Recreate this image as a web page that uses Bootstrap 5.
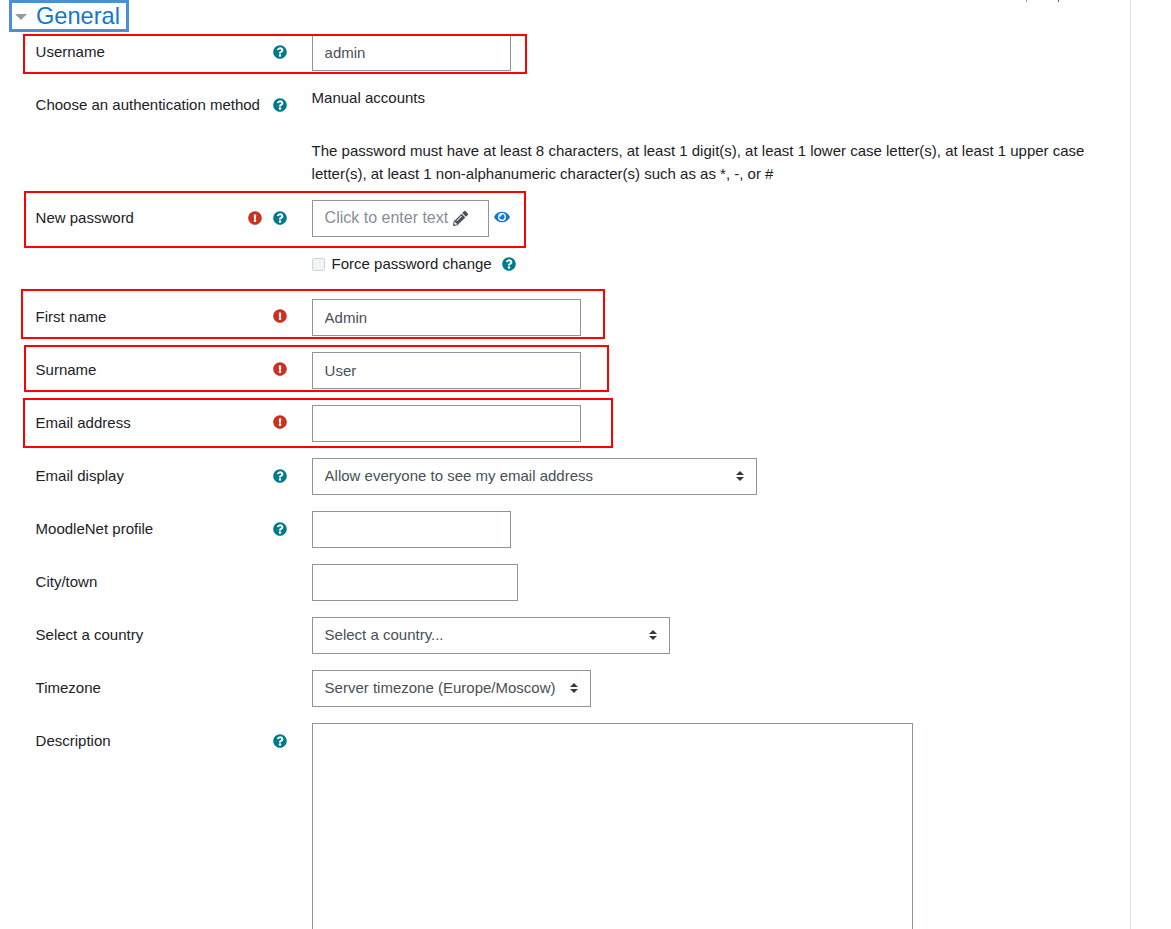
<!DOCTYPE html>
<html lang="en">
<head>
<meta charset="utf-8">
<title>General</title>
<link href="https://cdn.jsdelivr.net/npm/bootstrap@5.3.0/dist/css/bootstrap.min.css" rel="stylesheet">
<style>
html,body{height:929px;overflow:hidden;background:#fff}
body{font-family:"Liberation Sans",Arial,sans-serif;font-size:15px;line-height:22.5px;color:#1d2125}
.sheet{width:1131px;height:929px;border-right:1px solid #dee2e6;overflow:hidden;position:relative}
.speck{position:absolute;top:0;width:1px;height:2px}
.speck-a{left:1026px;background:#9a9a9a}
.speck-b{left:1058px;background:#1177d1}
.sect{display:flex;align-items:center;margin-left:9px;height:32px;width:120px;border:3px solid #4a90d2;font-size:23.6px;color:#1177d1;line-height:26px;padding-left:3px}
.tri{width:0;height:0;border-left:6px solid transparent;border-right:6px solid transparent;border-top:6px solid #999;margin:1px 9px 0 0}
.fitem{display:flex;position:relative;margin-left:35.6px;margin-bottom:16px;min-height:37px}
.lab{width:276px;flex:none;padding-right:25px;display:flex;justify-content:space-between;align-items:flex-start;padding-top:7px;line-height:22.5px}
.addons{display:flex;gap:11px;align-items:center;height:22.5px;padding-top:0}
.only-ex{padding-bottom:2px}
.ico{width:14px;height:14px;display:block}
.q{fill:#007a8c}
.ex{fill:#ca3120}
.fld{height:37px;border:1px solid #8f959e;border-radius:0;padding:6px 12px;font-size:15px;line-height:22.5px;color:#495057;box-shadow:none}
.w199{width:199px}.w206{width:206px}.w269{width:269px}.w177{width:177px}
select.fld{appearance:none;background:#fff url("data:image/svg+xml,%3Csvg xmlns='http://www.w3.org/2000/svg' width='10' height='12'%3E%3Cpath d='M1 5h8L5 1zM1 7h8l-4 4z' fill='%23343a40'/%3E%3C/svg%3E") no-repeat right 11px center;padding-right:28px}
.w445{width:445px}.w358{width:358px}.w279{width:279px}
textarea.fld{width:601px;height:300px;display:block}
.ann{position:absolute;border:2px solid #f00;pointer-events:none}
.ann-user{left:-13px;top:0;width:504.6px;height:40px}
.ann-pass{left:-12px;top:-9px;width:502px;height:57px}
.ann-first{left:-14.6px;top:-10px;width:584px;height:50px}
.ann-sur{left:-11.6px;top:-7px;width:585px;height:47px}
.ann-mail{left:-12.6px;top:-7px;width:590px;height:50px}
.first-row{margin-top:2px}
.auth-row{min-height:38px;margin-bottom:0}
.plain{margin-top:0}
.policy{margin-left:311.6px;width:790px;margin-top:15px;margin-bottom:15px}
.pass-row{margin-bottom:16px}
.editable{display:flex;align-items:center;color:#868e96;background:#fff;font-size:16px}
.pen{width:15px;height:15px;fill:#495057;margin-left:5px}
.eye{width:16px;height:14px;fill:#1177d1;margin:10px 0 0 5px;flex:none}
.force{margin-left:311.6px;margin-bottom:23px;height:22.5px;display:flex;align-items:center}
.box{width:13px;height:13px;border:1px solid #ced4da;background:#f3f3f3;border-radius:2px;margin-right:7px}
.force .ico{margin-left:10px}
</style>
</head>
<body>
<svg width="0" height="0" class="position-absolute">
<defs>
<symbol id="i-q" viewBox="0 0 512 512"><path d="M504 256c0 136.997-111.043 248-248 248S8 392.997 8 256C8 119.083 119.043 8 256 8s248 111.083 248 248zM262.655 90c-54.497 0-89.255 22.957-116.549 63.758-3.536 5.286-2.353 12.415 2.715 16.258l34.699 26.31c5.205 3.947 12.621 3.008 16.665-2.122 17.864-22.658 30.113-35.797 57.303-35.797 20.429 0 45.698 13.148 45.698 32.958 0 14.976-12.363 22.667-32.534 33.976C247.128 238.528 216 254.941 216 296v4c0 6.627 5.373 12 12 12h56c6.627 0 12-5.373 12-12v-1.333c0-28.462 83.186-29.647 83.186-106.667 0-58.002-60.165-106-116.531-106zM256 338c-25.365 0-46 20.635-46 46 0 25.364 20.635 46 46 46s46-20.636 46-46c0-25.365-20.635-46-46-46z"/></symbol>
<symbol id="i-x" viewBox="0 0 512 512"><path d="M504 256c0 136.997-111.043 248-248 248S8 392.997 8 256C8 119.083 119.043 8 256 8s248 111.083 248 248zm-248 50c-25.405 0-46 20.595-46 46s20.595 46 46 46 46-20.595 46-46-20.595-46-46-46zm-43.673-165.346l7.418 136c.347 6.364 5.609 11.346 11.982 11.346h48.546c6.373 0 11.635-4.982 11.982-11.346l7.418-136c.375-6.874-5.098-12.654-11.982-12.654h-63.383c-6.884 0-12.356 5.78-11.981 12.654z"/></symbol>
</defs>
</svg>
<div class="sheet">
<span class="speck speck-a"></span><span class="speck speck-b"></span>
<div class="sect"><span class="tri"></span>General</div>
<div class="fitem first-row">
  <div class="ann ann-user"></div>
  <div class="lab"><span>Username</span><span class="addons"><svg class="ico q"><use href="#i-q"/></svg></span></div>
  <input class="form-control fld w199" value="admin">
</div>
<div class="fitem auth-row">
  <div class="lab"><span>Choose an authentication method</span><span class="addons"><svg class="ico q"><use href="#i-q"/></svg></span></div>
  <div class="plain">Manual accounts</div>
</div>
<div class="policy">The password must have at least 8 characters, at least 1 digit(s), at least 1 lower case letter(s), at least 1 upper case letter(s), at least 1 non-alphanumeric character(s) such as as *, -, or #</div>
<div class="fitem pass-row">
  <div class="ann ann-pass"></div>
  <div class="lab"><span>New password</span><span class="addons"><svg class="ico ex"><use href="#i-x"/></svg><svg class="ico q"><use href="#i-q"/></svg></span></div>
  <div class="fld editable w177">Click to enter text<svg class="pen" viewBox="0 0 512 512"><path d="M497.9 142.1l-46.1 46.1c-4.7 4.7-12.3 4.7-17 0l-111-111c-4.7-4.7-4.7-12.3 0-17l46.1-46.1c18.7-18.7 49.1-18.7 67.9 0l60.1 60.1c18.8 18.7 18.8 49.1 0 67.9zM284.2 99.8L21.6 362.4.4 483.9c-2.9 16.4 11.4 30.6 27.8 27.8l121.5-21.3 262.6-262.6c4.7-4.7 4.7-12.3 0-17l-111-111c-4.8-4.7-12.4-4.7-17.1 0zM124.1 339.9c-5.5-5.5-5.5-14.3 0-19.8l154-154c5.5-5.5 14.3-5.5 19.8 0s5.5 14.3 0 19.8l-154 154c-5.5 5.5-14.3 5.5-19.8 0zM88 424h48v36.3l-64.5 11.3-31.1-31.1L51.7 376H88v48z"/></svg></div>
  <svg class="eye" viewBox="0 0 576 512"><path d="M572.52 241.4C518.29 135.59 410.93 64 288 64S57.68 135.64 3.48 241.41a32.35 32.35 0 0 0 0 29.19C57.71 376.41 165.07 448 288 448s230.32-71.64 284.52-177.41a32.35 32.35 0 0 0 0-29.19zM288 400a144 144 0 1 1 144-144 143.93 143.93 0 0 1-144 144zm0-240a95.31 95.31 0 0 0-25.31 3.79 47.85 47.85 0 0 1-66.9 66.9A95.78 95.78 0 1 0 288 160z"/></svg>
</div>
<div class="force"><span class="box"></span>Force password change<svg class="ico q"><use href="#i-q"/></svg></div>
<div class="fitem">
  <div class="ann ann-first"></div>
  <div class="lab"><span>First name</span><span class="addons only-ex"><svg class="ico ex"><use href="#i-x"/></svg></span></div>
  <input class="form-control fld w269" value="Admin">
</div>
<div class="fitem">
  <div class="ann ann-sur"></div>
  <div class="lab"><span>Surname</span><span class="addons only-ex"><svg class="ico ex"><use href="#i-x"/></svg></span></div>
  <input class="form-control fld w269" value="User">
</div>
<div class="fitem">
  <div class="ann ann-mail"></div>
  <div class="lab"><span>Email address</span><span class="addons only-ex"><svg class="ico ex"><use href="#i-x"/></svg></span></div>
  <input class="form-control fld w269" value="">
</div>
<div class="fitem">
  <div class="lab"><span>Email display</span><span class="addons"><svg class="ico q"><use href="#i-q"/></svg></span></div>
  <select class="form-select fld w445"><option>Allow everyone to see my email address</option></select>
</div>
<div class="fitem">
  <div class="lab"><span>MoodleNet profile</span><span class="addons"><svg class="ico q"><use href="#i-q"/></svg></span></div>
  <input class="form-control fld w199" value="">
</div>
<div class="fitem">
  <div class="lab"><span>City/town</span></div>
  <input class="form-control fld w206" value="">
</div>
<div class="fitem">
  <div class="lab"><span>Select a country</span></div>
  <select class="form-select fld w358"><option>Select a country...</option></select>
</div>
<div class="fitem">
  <div class="lab"><span>Timezone</span></div>
  <select class="form-select fld w279"><option>Server timezone (Europe/Moscow)</option></select>
</div>
<div class="fitem">
  <div class="lab"><span>Description</span><span class="addons"><svg class="ico q"><use href="#i-q"/></svg></span></div>
  <textarea class="form-control fld"></textarea>
</div>
</div>
</body>
</html>
